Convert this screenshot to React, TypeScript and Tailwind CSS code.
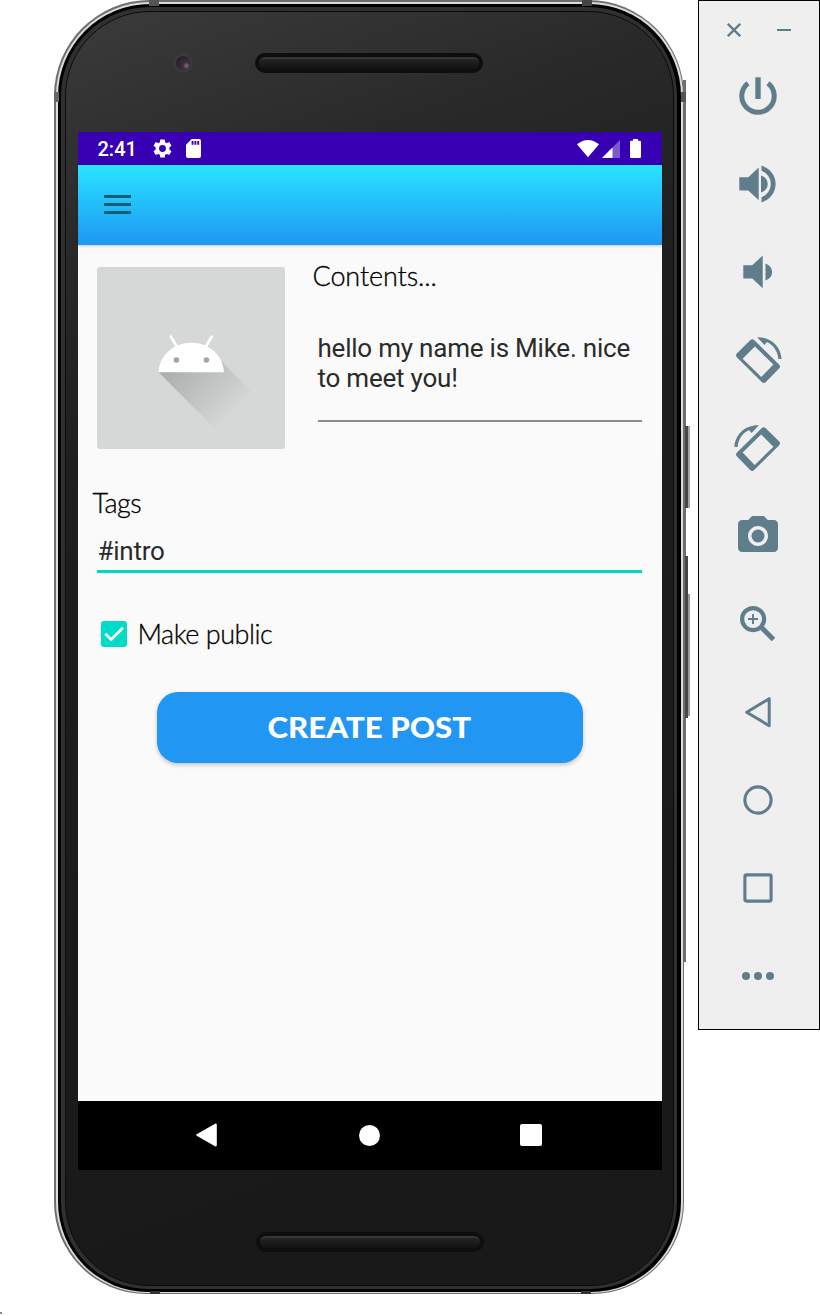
import type { ReactNode } from "react";

function ToolIcon({ children, flip = false }: { children: ReactNode; flip?: boolean }) {
  return (
    <button className="flex h-[88px] w-[118px] items-center justify-center">
      <svg viewBox="0 0 48 48" className={flip ? "size-12 -scale-x-100 overflow-visible" : "size-12 overflow-visible"} fill="currentColor">
        {children}
      </svg>
    </button>
  );
}

function RotateShape() {
  return (
    <>
      <path
        fillRule="evenodd"
        d="M16.200 4.300Q18.300 2.300 20.400 4.300L45 28.400Q47 30.500 45 32.600L31.900 46Q29.900 47.900 27.800 46L3 21.400Q.9 19.300 3 17.200ZM20.900 10.400 8.600 22.700 27.300 41 39.400 28.600Z"
      />
      <path d="M23.200 1.200C36.500.7 47 10.200 47.500 23H44.400C43.900 15.200 39.300 8.900 33 6L30.400 8.900Z" />
    </>
  );
}

function Toolbar() {
  return (
    <aside className="ml-[14px] h-[1030px] w-[122px] shrink-0 border border-black bg-[#efefef] text-[#607d8b]">
      <div className="flex h-[51px] items-center justify-between pt-[7px] pr-[28px] pl-[28px]">
        <svg viewBox="0 0 14 14" className="size-[14px]" stroke="currentColor" strokeWidth="2.3">
          <path d="M.8.8l12.400 12.400M13.200.8.8 13.200" />
        </svg>
        <span className="h-[2px] w-[14px] bg-[#607d8b]" />
      </div>
      <ToolIcon>
        <path d="M14 11.300A16.200 16.200 0 1 0 34 11.300" fill="none" stroke="currentColor" strokeWidth="5" />
        <path d="M21.300 5.300h5.400V27h-5.400z" />
      </ToolIcon>
      <ToolIcon>
        <path d="M5.300 17.300H14.300L24.700 7.500V40.300L14.300 30.500H5.300ZM27 15.400Q33.700 18 33.700 24T27 32.600Z" />
        <path d="M27.500 5.800A18.800 18.800 0 0 1 27.500 42.200V37.200A14 14 0 0 0 27.500 10.800Z" />
      </ToolIcon>
      <ToolIcon>
        <path d="M9.300 17.300H18.300L28.700 7.500V40.300L18.300 30.500H9.300ZM31.500 15.400Q38.100 18 38.100 24T31.500 32.600Z" />
      </ToolIcon>
      <ToolIcon>
        <RotateShape />
      </ToolIcon>
      <ToolIcon flip>
        <RotateShape />
      </ToolIcon>
      <ToolIcon>
        <circle cx="24" cy="24" r="6.5" />
        <path d="M18 4l-3.660 4H8c-2.200 0-4 1.800-4 4v24c0 2.200 1.800 4 4 4h32c2.200 0 4-1.800 4-4V12c0-2.200-1.800-4-4-4h-6.340L30 4H18zm6 30c-5.520 0-10-4.480-10-10s4.480-10 10-10 10 4.480 10 10-4.480 10-10 10z" />
      </ToolIcon>
      <ToolIcon>
        <g fill="none" stroke="currentColor">
          <circle cx="19.1" cy="19.1" r="11" strokeWidth="4.2" />
          <path d="M28 28 39.500 39.500" strokeWidth="5" />
          <path d="M14 19H24M19 14V24" strokeWidth="1.9" />
        </g>
      </ToolIcon>
      <ToolIcon>
        <path d="M12.700 24.200 35.200 10.700V37.700Z" fill="none" stroke="currentColor" strokeWidth="3" strokeLinejoin="round" />
      </ToolIcon>
      <ToolIcon>
        <circle cx="24" cy="24" r="13.1" fill="none" stroke="currentColor" strokeWidth="3.1" />
      </ToolIcon>
      <ToolIcon>
        <rect x="10.9" y="10.9" width="26.2" height="26.2" rx="1.5" fill="none" stroke="currentColor" strokeWidth="3.1" />
      </ToolIcon>
      <ToolIcon>
        <circle cx="12" cy="24" r="4" />
        <circle cx="24" cy="24" r="4" />
        <circle cx="36" cy="24" r="4" />
      </ToolIcon>
    </aside>
  );
}

function StatusBar() {
  return (
    <div className="flex h-[33px] items-center bg-[#3700b3] pr-[21px] pl-[20px] text-white">
      <span className="w-[55px] pt-px text-[20px] leading-none font-medium">2:41</span>
      <svg viewBox="2 2 20 20" className="size-[19px]" fill="currentColor">
        <path d="M19.140 12.940c.04-.3.06-.61.06-.94 0-.32-.02-.64-.07-.94l2.030-1.580a.49.49 0 0 0 .12-.61l-1.920-3.320a.488.488 0 0 0-.59-.22l-2.390.96c-.5-.38-1.030-.7-1.620-.94l-.36-2.540a.484.484 0 0 0-.48-.41h-3.840c-.24 0-.43.17-.47.41l-.36 2.540c-.59.24-1.130.57-1.620.94l-2.390-.96a.488.488 0 0 0-.59.22L2.740 8.870c-.12.21-.08.47.12.61l2.030 1.580c-.05.3-.09.63-.09.94s.02.64.07.94l-2.030 1.580a.49.49 0 0 0-.12.61l1.920 3.320c.12.22.37.29.59.22l2.390-.96c.5.38 1.030.7 1.620.94l.36 2.540c.05.24.24.41.48.41h3.840c.24 0 .44-.17.47-.41l.36-2.540c.59-.24 1.130-.56 1.620-.94l2.390.96c.22.08.47 0 .59-.22l1.920-3.320a.49.49 0 0 0-.12-.61zM12 15.600A3.600 3.600 0 1 1 12 8.400a3.600 3.600 0 0 1 0 7.200z" />
      </svg>
      <svg viewBox="4 2 16 20" className="ml-[14px] h-[19px] w-[15px]" preserveAspectRatio="none" fill="currentColor">
        <path d="M18 2h-8L4 8v12a2 2 0 0 0 2 2h12a2 2 0 0 0 2-2V4a2 2 0 0 0-2-2zm-6 6h-2V4h2zm3 0h-2V4h2zm3 0h-2V4h2z" />
      </svg>
      <svg viewBox="0 0 22 17" className="ml-auto h-[17px] w-[22px]" fill="currentColor">
        <path d="M0 4.300Q11-4.300 22 4.300L11 17.300Z" />
      </svg>
      <svg viewBox="0 0 18 18" className="ml-[3px] size-[18px]" fill="currentColor">
        <path d="M18 0V18H0Z" opacity=".35" />
        <path d="M10.500 7.500V18H0Z" />
      </svg>
      <svg viewBox="0 0 11 19" className="ml-[10px] h-[19px] w-[11px]" fill="currentColor">
        <path d="M3 0H8V1.800H9.800Q11 1.800 11 3V17.800Q11 19 9.800 19H1.200Q0 19 0 17.800V3Q0 1.800 1.200 1.800H3Z" />
      </svg>
    </div>
  );
}

function AndroidImage() {
  return (
    <svg viewBox="0 0 188 182" className="mt-[22px] ml-[19px] h-[182px] w-[188px] shrink-0 rounded-[3px] bg-[#d6d8d7]">
      <defs>
        <linearGradient id="shade" gradientUnits="userSpaceOnUse" x1="76" y1="90" x2="135" y2="149">
          <stop offset="0" stopColor="#a9abaa" />
          <stop offset="1" stopColor="#d6d8d7" />
        </linearGradient>
      </defs>
      <path d="M61.500 105.300 124 167.800 161 131 124 94Z" fill="url(#shade)" />
      <path d="M61.500 105.300C62.700 88 76.500 75.800 94.300 75.800S125.700 88 127 105.300Z" fill="#fff" />
      <path d="M73.800 69.500 80 80M114.800 69.500 108.600 80" stroke="#fff" strokeWidth="2.6" strokeLinecap="round" />
      <circle cx="79.4" cy="93" r="2.8" fill="#a4a4a4" />
      <circle cx="109.4" cy="93" r="2.8" fill="#a4a4a4" />
    </svg>
  );
}

function Screen() {
  return (
    <main className="flex h-[1038px] w-[584px] flex-col bg-[#fafafa] font-['Roboto',sans-serif]">
      <StatusBar />
      <header className="flex h-[79.5px] items-center bg-linear-to-b from-[#2ce4ff] to-[#2196f3] pl-[26px] shadow-[0_1px_3px_rgba(0,0,0,0.2)]">
        <div className="flex w-[27px] flex-col gap-[5px] text-[#145c77]">
          <span className="h-[3px] bg-current" />
          <span className="h-[3px] bg-current" />
          <span className="h-[3px] bg-current" />
        </div>
      </header>
      <section className="flex">
        <AndroidImage />
        <div className="ml-[27px] flex w-[330px] flex-col">
          <h2 className="mt-[14px] pl-px font-['Lato',sans-serif] text-[27px] leading-[34px] font-light tracking-[-0.1px] text-black [-webkit-text-stroke:0.3px_black]">Contents...</h2>
          <p className="mt-[40px] ml-[6px] h-[89px] w-[324px] border-b-2 border-[#8b8b8b] text-[26px] leading-[30px] tracking-[-0.22px] whitespace-nowrap text-[#2a2a2a]">
            hello my name is Mike. nice
            <br />
            to meet you!
          </p>
        </div>
      </section>
      <section className="mt-[37px] flex flex-col px-[14px]">
        <h2 className="pl-px font-['Lato',sans-serif] text-[27px] leading-[34px] font-light tracking-[-0.5px] text-black [-webkit-text-stroke:0.3px_black]">Tags</h2>
        <div className="mt-[15px] ml-[5px] h-[38px] w-[545px] border-b-[3px] border-[#00dac5] pl-px text-[26px] leading-[32px] tracking-[-0.24px] text-[#2a2a2a]">#intro</div>
      </section>
      <label className="mt-[43px] ml-[23px] flex h-[36px] items-center">
        <svg viewBox="0 0 26 26" className="size-[26px]">
          <rect width="26" height="26" rx="3" fill="#00dcc7" />
          <path d="M4.300 12.700 10.200 18.600 22 6.800" fill="none" stroke="#fafafa" strokeWidth="2.8" />
        </svg>
        <span className="ml-[11px] font-['Lato',sans-serif] text-[27px] leading-[36px] font-light tracking-[-0.45px] text-black [-webkit-text-stroke:0.3px_black]">Make public</span>
      </label>
      <button className="mt-[40px] ml-[79px] flex h-[71px] w-[426px] items-center justify-center rounded-[21px] bg-[#2196f3] font-['Lato',sans-serif] text-[28px] font-black text-white shadow-[0_2px_4px_rgba(0,0,0,0.22)]">
        <span className="inline-block scale-x-[1.115]">CREATE POST</span>
      </button>
      <nav className="mt-auto flex h-[69px] items-center bg-black pb-px">
        <svg viewBox="0 0 21 24" className="ml-[118px] h-[24px] w-[21px]" fill="#fff">
          <path d="M.7 11.300 19 .7Q20.800 0 20.800 2V22Q20.800 24 19 23.300L.7 12.700Q-.3 12 .7 11.300Z" />
        </svg>
        <span className="ml-[142px] size-[21px] rounded-full bg-white" />
        <span className="ml-[140px] size-[22px] rounded-[2px] bg-white" />
      </nav>
    </main>
  );
}

function Speaker() {
  return (
    <div className="h-[20px] w-[228px] rounded-full bg-[#0e0e0e] p-[4px]">
      <div className="h-[12px] rounded-full border-t-2 border-[#363636] bg-linear-to-b from-[#242424] to-[#121212]" />
    </div>
  );
}

function Phone() {
  return (
    <div className="relative ml-[54px] h-[1294px] w-[630px] shrink-0 rounded-t-[96px] rounded-b-[92px] bg-[#6d6f6d] pt-[2px] pr-px pb-px pl-[2px]">
      <div className="h-full rounded-t-[94px] rounded-b-[91px] bg-[#dcdcdc] p-[2px] pb-px">
        <div className="h-full rounded-t-[92px] rounded-b-[90px] bg-black pt-[3px] pr-[4px] pb-[3px] pl-[3px]">
          <div className="h-full rounded-t-[89px] rounded-b-[87px] bg-[#303030] pt-[4px] pr-[3px] pb-[3px] pl-[4px]">
            <div className="flex h-full flex-col items-center rounded-t-[85px] rounded-b-[84px] border border-[#0b0b0b] bg-[linear-gradient(160deg,#3b3b3b_0%,#292929_16%,#1e1e1e_32%,#181818_100%)]">
              <div className="flex h-[120px] w-full shrink-0">
                <div className="mt-[41px] ml-[107px] flex size-[20px] items-center justify-center rounded-full bg-[#3a3a3a]">
                  <span className="size-[14px] rounded-full bg-[radial-gradient(circle_at_75%_70%,#9a6670_0%,#39303c_25%,#25222d_70%)]" />
                </div>
                <div className="mt-[41px] ml-[62px]">
                  <Speaker />
                </div>
              </div>
              <Screen />
              <div className="mt-[62px]">
                <Speaker />
              </div>
            </div>
          </div>
        </div>
      </div>
      <span className="absolute top-0 left-[95px] h-[6px] w-[10px] bg-[#555]" />
      <span className="absolute top-0 left-[528px] h-[6px] w-[10px] bg-[#444]" />
      <span className="absolute top-[92px] left-0 h-[10px] w-[5px] bg-[#666]" />
      <span className="absolute bottom-0 left-[96px] h-[3px] w-[10px] bg-[#333]" />
      <span className="absolute bottom-0 left-[527px] h-[3px] w-[10px] bg-[#333]" />
      <span className="absolute top-[80px] left-[629px] h-[882px] w-[3px] bg-[#6d6f6d]" />
      <span className="absolute top-[92px] left-[627px] h-[10px] w-[5px] bg-[#555]" />
      <span className="absolute top-[426px] left-[631px] h-[82px] w-[5px] border-r-2 border-[#a5a5a5] bg-[#444846]" />
      <span className="absolute top-[556px] left-[631px] h-[162px] w-[3px] bg-[#444846]" />
      <span className="absolute top-[594px] left-[634px] h-[122px] w-[2px] bg-[#999]" />
    </div>
  );
}

export default function App() {
  return (
    <div className="relative flex h-[1316px] w-[820px] items-start overflow-hidden bg-white">
      <Phone />
      <Toolbar />
      <span className="absolute top-[1312px] left-0 h-[2px] w-[2px] bg-[#888]" />
    </div>
  );
}
